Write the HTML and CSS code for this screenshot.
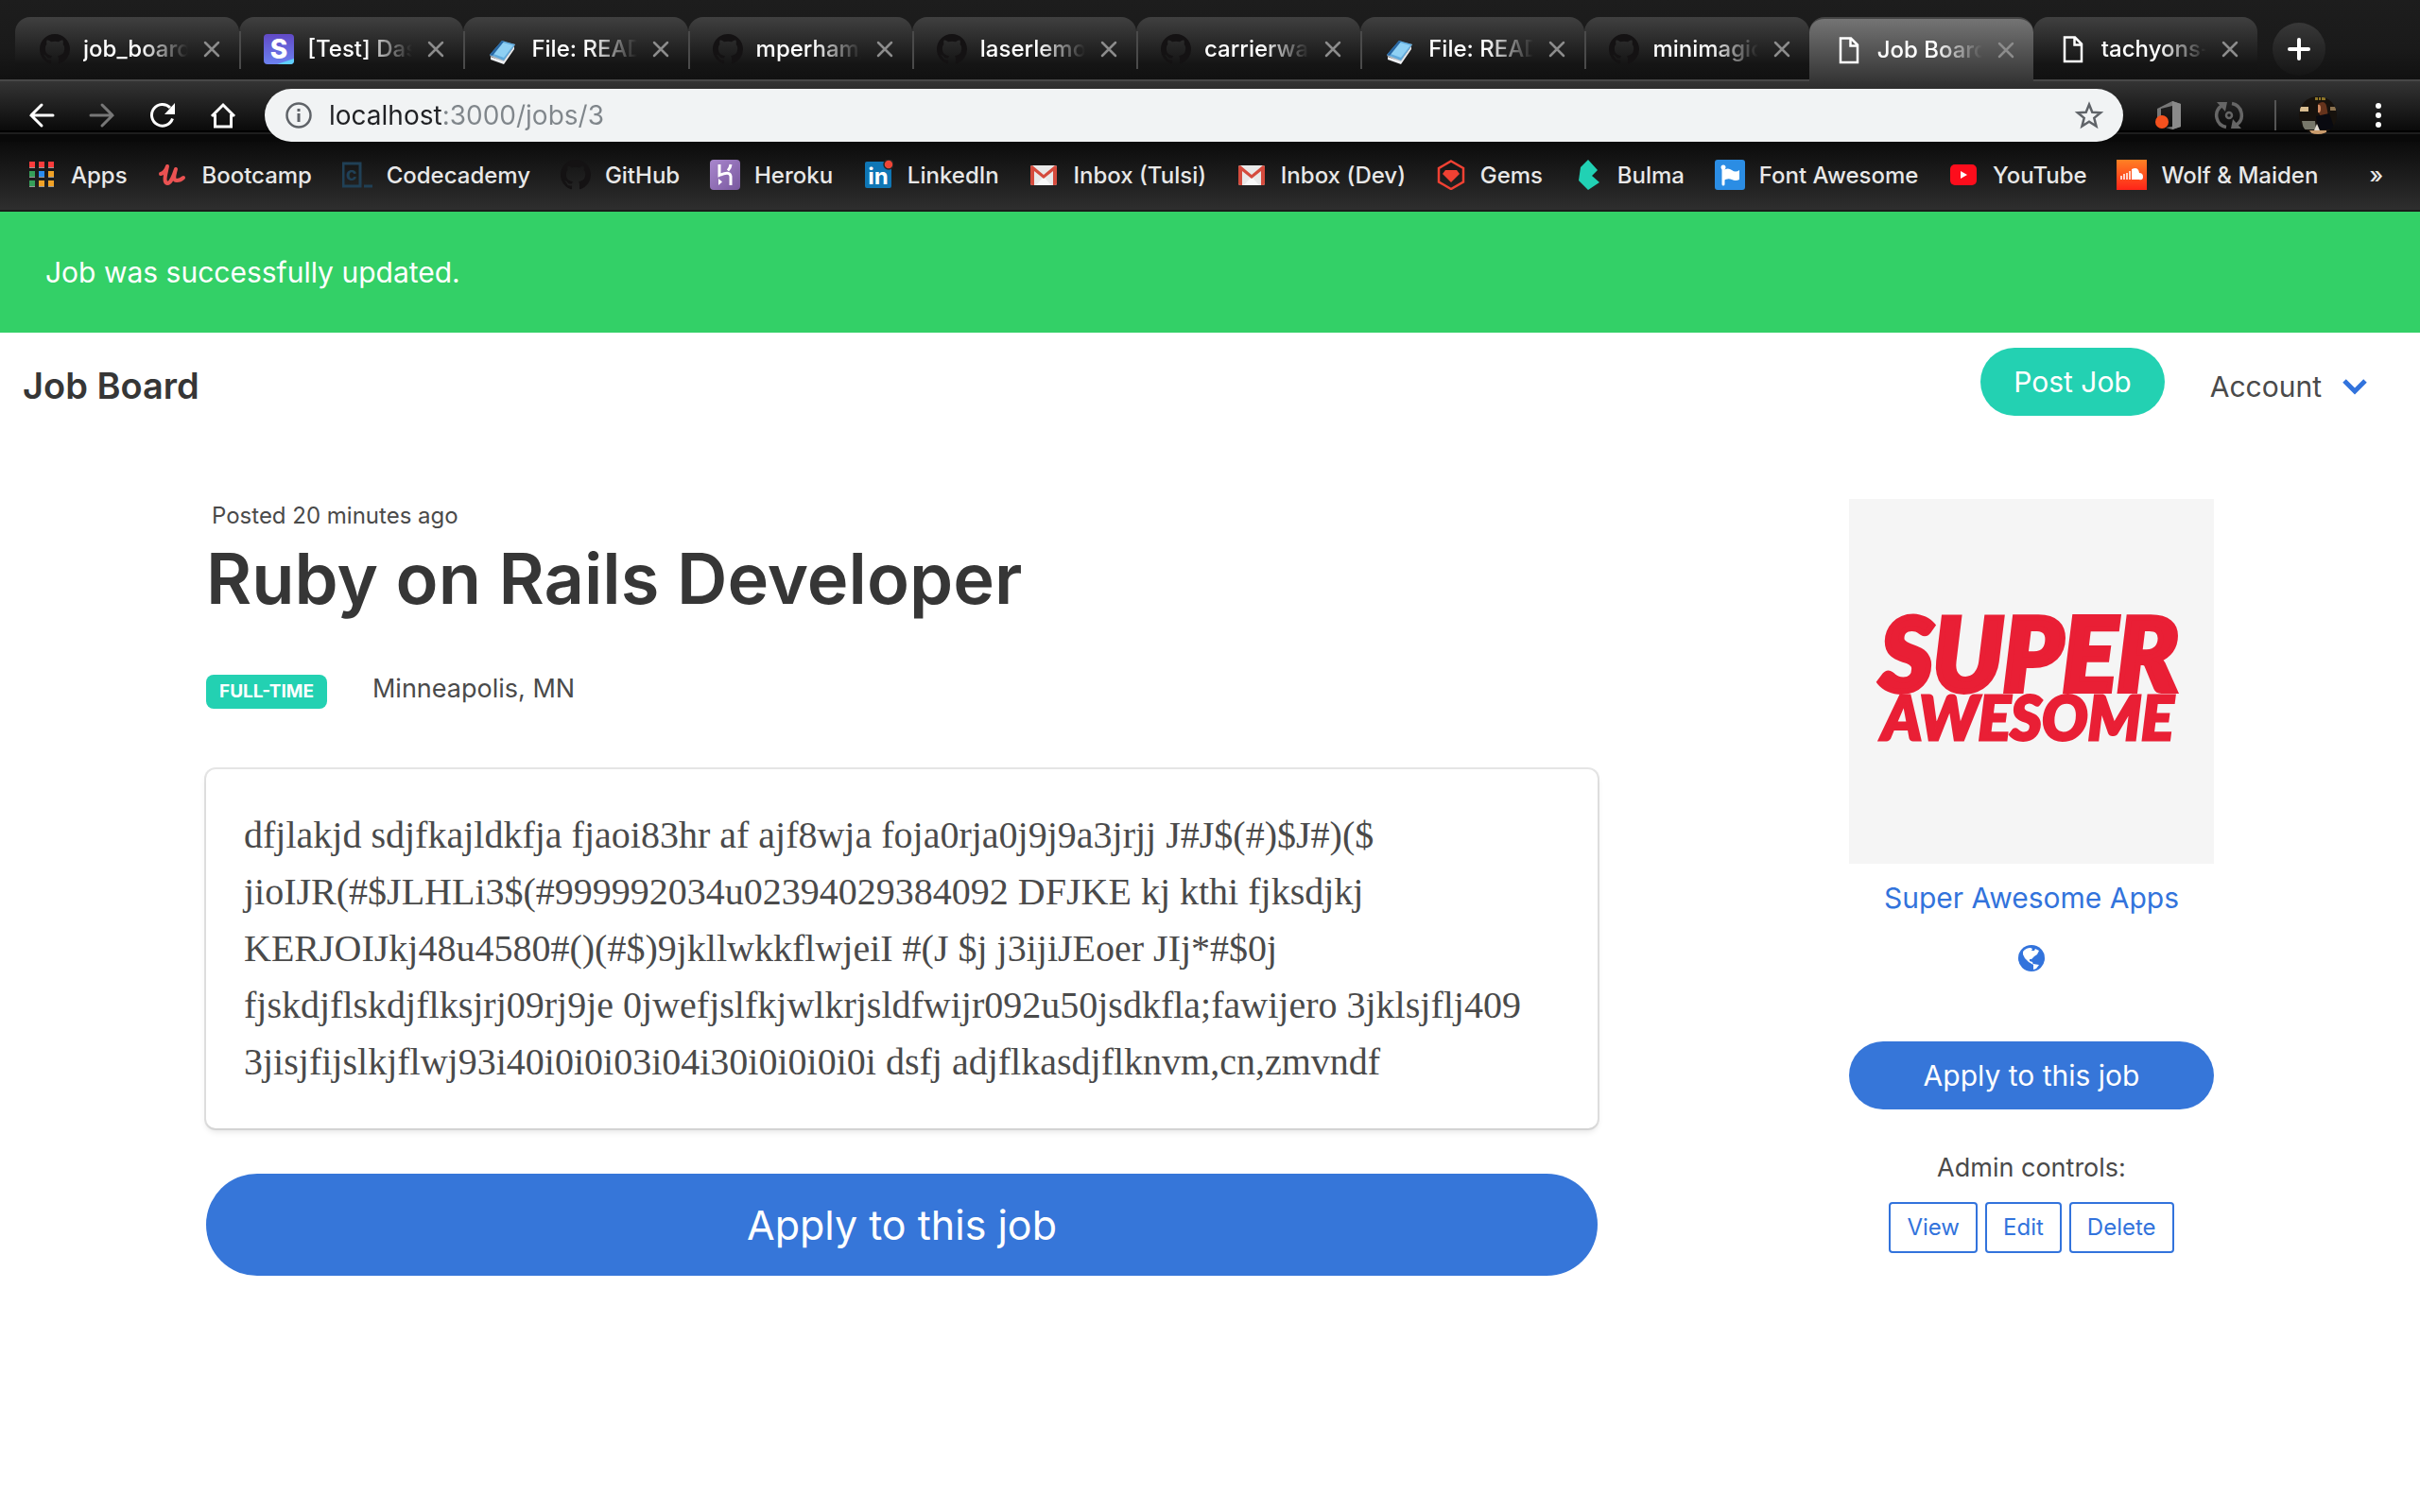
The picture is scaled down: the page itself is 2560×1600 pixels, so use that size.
FILE: index.html
```html
<!DOCTYPE html>
<html lang="en">
<head>
<meta charset="utf-8">
<title>Job Board</title>
<link rel="stylesheet" href="styles.css">
</head>
<body>
<svg class="sprite" aria-hidden="true">
  <defs>
    <symbol id="octocat" viewBox="0 0 16 16"><path d="M8 0C3.58 0 0 3.58 0 8c0 3.54 2.29 6.53 5.47 7.59.4.07.55-.17.55-.38 0-.19-.01-.82-.01-1.49-2.01.37-2.53-.49-2.69-.94-.09-.23-.48-.94-.82-1.13-.28-.15-.68-.52-.01-.53.63-.01 1.08.58 1.23.82.72 1.21 1.87.87 2.33.66.07-.52.28-.87.51-1.07-1.78-.2-3.64-.89-3.64-3.95 0-.87.31-1.59.82-2.15-.08-.2-.36-1.02.08-2.12 0 0 .67-.21 2.2.82.64-.18 1.32-.27 2-.27s1.36.09 2 .27c1.53-1.04 2.2-.82 2.2-.82.44 1.1.16 1.92.08 2.12.51.56.82 1.27.82 2.15 0 3.07-1.87 3.75-3.65 3.95.29.25.54.73.54 1.48 0 1.07-.01 1.93-.01 2.2 0 .21.15.46.55.38A8.01 8.01 0 0 0 16 8c0-4.42-3.58-8-8-8z" fill="#141213"/></symbol>
    <symbol id="book" viewBox="0 0 32 32"><path d="M2 23 16 8l13 3-12 19z" fill="#b9bdc4"/><path d="M3 24l14 5 11-16v3L17 32 3 27z" fill="#eef0f3"/><path d="M2 22 15 7l14 4-12 17z" fill="#5fa9dc"/><path d="M6 21 16 9l11 3-10 13z" fill="#8fd0f4"/><path d="M2 22 15 7l2 1L5 23z" fill="#2867a3"/></symbol>
    <symbol id="page" viewBox="0 0 32 32"><path d="M7 3.500h11l7 7V29H7zM17.500 4v7.500H25" fill="none" stroke="#fff" stroke-width="2.500"/></symbol>
    <symbol id="cross" viewBox="0 0 18 18"><path d="M2 2l14 14M16 2 2 16" fill="none" stroke="#8c8c8c" stroke-width="2.500" stroke-linecap="round"/></symbol>
    <symbol id="gmail" viewBox="0 0 32 32"><rect x="2" y="6" width="28" height="21" rx="2" fill="#e9e9e9"/><path d="M8 27l8-9 8 9z" fill="#f8f8f8"/><path d="M2 8a2 2 0 0 1 2-2l12 10L28 6a2 2 0 0 1 2 2v17a2 2 0 0 1-2 2h-2V12L16 20 6 12v15H4a2 2 0 0 1-2-2z" fill="#d54b3d"/></symbol>
    <linearGradient id="stripeFill" x1="0" y1="0" x2="0" y2="1"><stop offset="0" stop-color="#6149c6"/><stop offset="1" stop-color="#6c82f0"/></linearGradient>
    <linearGradient id="herokuFill" x1="0" y1="0" x2="1" y2="1"><stop offset="0" stop-color="#a987cd"/><stop offset="1" stop-color="#79589f"/></linearGradient>
    <linearGradient id="cloudFill" x1="0" y1="0" x2="0" y2="1"><stop offset="0" stop-color="#ff8124"/><stop offset="1" stop-color="#ff2419"/></linearGradient>
  </defs>
</svg>

<header class="browser">
  <nav class="tabs" aria-label="Tabs">
    <div class="tab"><a href="#"><svg class="ico"><use href="#octocat"/></svg><span>job_board</span></a><button aria-label="Close"><svg><use href="#cross"/></svg></button></div>
    <div class="tab"><a href="#"><svg class="ico" viewBox="0 0 32 32"><rect width="32" height="32" rx="4" fill="url(#stripeFill)"/><path d="M14 32 32 26v2a4 4 0 0 1-4 4z" fill="#5fd0fb"/><text x="16" y="26" text-anchor="middle" class="mark-s">S</text></svg><span>[Test] Dashboard</span></a><button aria-label="Close"><svg><use href="#cross"/></svg></button></div>
    <div class="tab"><a href="#"><svg class="ico"><use href="#book"/></svg><span>File: README</span></a><button aria-label="Close"><svg><use href="#cross"/></svg></button></div>
    <div class="tab"><a href="#"><svg class="ico"><use href="#octocat"/></svg><span>mperham/</span></a><button aria-label="Close"><svg><use href="#cross"/></svg></button></div>
    <div class="tab"><a href="#"><svg class="ico"><use href="#octocat"/></svg><span>laserlemon</span></a><button aria-label="Close"><svg><use href="#cross"/></svg></button></div>
    <div class="tab"><a href="#"><svg class="ico"><use href="#octocat"/></svg><span>carrierwave</span></a><button aria-label="Close"><svg><use href="#cross"/></svg></button></div>
    <div class="tab"><a href="#"><svg class="ico"><use href="#book"/></svg><span>File: README</span></a><button aria-label="Close"><svg><use href="#cross"/></svg></button></div>
    <div class="tab plain"><a href="#"><svg class="ico"><use href="#octocat"/></svg><span>minimagick</span></a><button aria-label="Close"><svg><use href="#cross"/></svg></button></div>
    <div class="tab active plain"><a href="#"><svg class="ico"><use href="#page"/></svg><span>Job Board</span></a><button aria-label="Close"><svg><use href="#cross"/></svg></button></div>
    <div class="tab plain"><a href="#"><svg class="ico"><use href="#page"/></svg><span>tachyons-</span></a><button aria-label="Close"><svg><use href="#cross"/></svg></button></div>
    <button class="new-tab" aria-label="New tab"><svg viewBox="0 0 24 24"><path d="M12 2v20M2 12h20" stroke="#fff" stroke-width="4" stroke-linecap="round"/></svg></button>
  </nav>

  <div class="toolbar">
    <button class="tool" aria-label="Back"><svg viewBox="0 0 32 32"><path d="M28 16H5M16 5 5 16l11 11" fill="none" stroke="#fff" stroke-width="3" stroke-linecap="round"/></svg></button>
    <button class="tool" aria-label="Forward"><svg viewBox="0 0 32 32"><path d="M4 16h23M16 5l11 11-11 11" fill="none" stroke="#777" stroke-width="3" stroke-linecap="round"/></svg></button>
    <button class="tool" aria-label="Reload"><svg viewBox="0 0 32 32"><path d="M26.500 19.500A11.300 11.300 0 1 1 24 8" fill="none" stroke="#fff" stroke-width="3"/><path d="M29 3v12H18z" fill="#fff"/></svg></button>
    <button class="tool" aria-label="Home"><svg viewBox="0 0 32 32"><path d="M4 17 16 5l12 12M7.500 15v13h17V15" fill="none" stroke="#fff" stroke-width="3"/></svg></button>
    <div class="omnibox">
      <svg class="info" viewBox="0 0 28 28"><circle cx="14" cy="14" r="12.500" fill="none" stroke="#5f6368" stroke-width="2.500"/><path d="M14 12v9M14 7v3" stroke="#5f6368" stroke-width="3"/></svg>
      <input type="text" value="localhost:3000/jobs/3" aria-label="Address">
      <svg class="star" viewBox="0 0 32 32"><path d="M16 4.500l3.300 8.200 8.800.6-6.800 5.600 2.200 8.600L16 22.700l-7.500 4.800 2.200-8.600-6.800-5.600 8.800-.6z" fill="none" stroke="#5f6368" stroke-width="2.500"/></svg>
    </div>
    <button class="tool" aria-label="Office"><svg viewBox="0 0 32 32"><path d="M4 9 20 1l9 3v24l-9 3-7-2 7-1V6L8 9v10H4z" fill="#777"/><path d="M20 1l9 3v24l-9 3z" fill="#8a8a8a"/><circle cx="9" cy="23" r="7" fill="#f4511e"/></svg></button>
    <button class="tool" aria-label="Sync"><svg viewBox="0 0 32 32"><g fill="none" stroke="#666" stroke-width="3.500"><path d="M13 28.500A12.500 12.500 0 0 1 8 6M19 3.500A12.500 12.500 0 0 1 24 26"/><circle cx="16" cy="16" r="3" stroke-width="2.500"/></g><path d="M3 2h11l-2 10zM29 30H18l2-10z" fill="#666"/></svg></button>
    <span class="divider"></span>
    <button class="avatar" aria-label="Profile"><svg viewBox="0 0 40 40"><rect width="40" height="40" fill="#17120d"/><path d="M1 11h9v5H1z" fill="#d9bd90"/><path d="M33 11h6v4h-6z" fill="#8c7350"/><path d="M17 1h3v3h-3zM21 1h2v3h-2zM24 1h4v3h-4z" fill="#8d7528"/><path d="M20 8q7-5 9 2l2 11-6 3-4-6z" fill="#65331c"/><path d="M20 9q3-1 3 4t-3 4z" fill="#d08a62"/><path d="M18 21l14-3 6 17H20z" fill="#090a10"/><path d="M3 26h14l1 9H5z" fill="#77776a"/><path d="M11 36h18v4H14z" fill="#c99b6c"/><path d="M19 29l3 7h-6z" fill="#e2dcd2"/></svg></button>
    <button class="tool more" aria-label="Menu"><svg viewBox="0 0 32 32" fill="#fff"><circle cx="16" cy="6" r="3"/><circle cx="16" cy="16" r="3"/><circle cx="16" cy="26" r="3"/></svg></button>
  </div>

  <nav class="bookmarks" aria-label="Bookmarks">
    <div class="marks">
    <a href="#"><svg class="ico" viewBox="0 0 32 32"><path d="M3 2h6v6H3zM13 2h6v6h-6zM23 2h6v6h-6z" fill="#fa3c3c"/><path d="M3 12h6v6H3zM3 22h6v6H3z" fill="#36a05a"/><path d="M13 12h6v6h-6z" fill="#2a8cf0"/><path d="M23 12h6v6h-6zM13 22h6v6h-6zM23 22h6v6h-6z" fill="#f0a227"/><path d="M3 8h6v1H3zM13 8h6v1h-6zM23 8h6v1h-6zM3 18h6v1H3zM13 18h6v1h-6zM23 18h6v1h-6zM3 28h6v1H3zM13 28h6v1h-6zM23 28h6v1h-6z" fill="#999"/></svg>Apps</a>
    <a href="#"><svg class="ico" viewBox="0 0 32 32"><path d="M4 15c4-1 6-5 7-8-1 6-5 17 0 18 4 0 7-9 9-15-2 7-3 12 1 12 3 0 5-1 7-3" fill="none" stroke="#ea5252" stroke-width="4" stroke-linecap="round" stroke-linejoin="round"/></svg>Bootcamp</a>
    <a href="#"><svg class="ico" viewBox="0 0 32 32"><rect x="1" y="4" width="18" height="24" fill="none" stroke="#204056" stroke-width="3"/><text x="10" y="22" text-anchor="middle" class="mark-c">c</text><path d="M23 28h9" stroke="#204056" stroke-width="3"/></svg>Codecademy</a>
    <a href="#"><svg class="ico"><use href="#octocat"/></svg>GitHub</a>
    <a href="#"><svg class="ico" viewBox="0 0 32 32"><rect width="32" height="32" rx="4" fill="url(#herokuFill)"/><path d="M10 5v11.500q11-5 12 1V27M22 5q-.5 4-3 6.500" fill="none" stroke="#fff" stroke-width="3"/><path d="M9 20l4 3.500L9 27z" fill="#fff"/></svg>Heroku</a>
    <a href="#"><svg class="ico" viewBox="0 0 32 32"><rect x="2" y="2" width="28" height="28" rx="2" fill="#0f76b5"/><text x="16" y="26" text-anchor="middle" class="mark-in">in</text><circle cx="27" cy="5" r="5" fill="#ee4536" stroke="#262626" stroke-width="1.500"/></svg>LinkedIn</a>
    <a href="#"><svg class="ico"><use href="#gmail"/></svg>Inbox (Tulsi)</a>
    <a href="#"><svg class="ico"><use href="#gmail"/></svg>Inbox (Dev)</a>
    <a href="#"><svg class="ico" viewBox="0 0 32 32"><path d="M16 1.500 29 9v14.500L16 31 3 23.500V9z" fill="none" stroke="#f04133" stroke-width="2.500"/><path d="M10 11h12l3 4-9 9-9-9z" fill="#f04133"/></svg>Gems</a>
    <a href="#"><svg class="ico" viewBox="-5 0 32 32"><path d="M11 0 21 11l-6 6 8 7L11 32 1 22 3 8z" fill="#21d1b4"/></svg>Bulma</a>
    <a href="#"><svg class="ico" viewBox="0 0 32 32"><rect width="32" height="32" rx="3" fill="#2b8de4"/><path d="M9 8v18" stroke="#fff" stroke-width="3" stroke-linecap="round"/><circle cx="9" cy="8" r="2.500" fill="#fff"/><path d="M9 11q5-3 9 0t8 0v10q-4 2-8 0t-9 1z" fill="#fff"/></svg>Font Awesome</a>
    <a href="#"><svg class="ico" viewBox="0 0 32 32"><rect x="2" y="5" width="28" height="22" rx="5" fill="#fd0d1c"/><path d="M13 12l7 4-7 4z" fill="#fff"/></svg>YouTube</a>
    <a href="#"><svg class="ico" viewBox="0 0 32 32"><rect width="32" height="32" fill="url(#cloudFill)"/><path d="M5 17v4M8 15v6M11 14v7M14 12v9" stroke="#fff" stroke-width="1.500"/><path d="M16 10q7-3 8 4 4 0 4 4t-4 3h-8z" fill="#fff"/></svg>Wolf &amp; Maiden</a>
    </div>
    <button class="overflow" aria-label="More bookmarks">»</button>
  </nav>
</header>

<div class="notice" role="status">Job was successfully updated.</div>

<nav class="site-nav">
  <a class="brand" href="#">Job Board</a>
  <a class="pill post" href="#">Post Job</a>
  <button class="account">Account<svg viewBox="0 0 26 18"><path d="M2 3l11 11L24 3" fill="none" stroke="#3273dc" stroke-width="5"/></svg></button>
</nav>

<main class="job">
  <article>
    <p class="posted">Posted 20 minutes ago</p>
    <h1>Ruby on Rails Developer</h1>
    <div class="meta"><span class="tag">FULL-TIME</span><span class="place">Minneapolis, MN</span></div>
    <div class="box">dfjlakjd sdjfkajldkfja fjaoi83hr af ajf8wja foja0rja0j9j9a3jrjj J#J$(#)$J#)($ jioIJR(#$JLHLi3$(#999992034u02394029384092 DFJKE kj kthi fjksdjkj KERJOIJkj48u4580#()(#$)9jkllwkkflwjeiI #(J $j j3ijiJEoer JIj*#$0j fjskdjflskdjflksjrj09rj9je 0jwefjslfkjwlkrjsldfwijr092u50jsdkfla;fawijero 3jklsjflj409 3jisjfijslkjflwj93i40i0i0i03i04i30i0i0i0i0i dsfj adjflkasdjflknvm,cn,zmvndf</div>
    <a class="pill apply large" href="#">Apply to this job</a>
  </article>
  <aside>
    <svg class="company-logo" viewBox="0 0 386 386" role="img" aria-label="Super Awesome">
      <rect width="386" height="386" fill="#f5f5f5"/>
      <text x="33" y="203" class="logo-top">SUPER</text>
      <text x="35" y="255" class="logo-bottom">AWESOME</text>
    </svg>
    <a class="company" href="#">Super Awesome Apps</a>
    <a class="site" href="#" aria-label="Website"><svg viewBox="0 0 28 28"><circle cx="14" cy="14" r="14" fill="#3273dc"/><path d="M5 7q3-4 8-4l2 1-1 2 3 0 1-2 4 2-2 4-3 2-3 3-2 0 0 2 3 1 1 3-5-3-4-4-2-4z" fill="#fff"/><path d="M16 20l6 1-3 4-3 1z" fill="#fff"/></svg></a>
    <a class="pill apply" href="#">Apply to this job</a>
    <p class="admin">Admin controls:</p>
    <div class="controls"><a href="#">View</a><a href="#">Edit</a><a href="#">Delete</a></div>
  </aside>
</main>
</body>
</html>
```
FILE: styles.css
```css
* { box-sizing: border-box; }
body { margin: 0; background: #fff; color: #4a4a4a; font-family: Inter, "Liberation Sans", sans-serif; }
a { color: inherit; text-decoration: none; }
button { border: 0; padding: 0; background: none; color: inherit; font: inherit; }
svg { display: block; flex: none; }
p, h1 { margin: 0; }
.sprite { position: absolute; width: 0; height: 0; }
.ico { width: 32px; height: 32px; }

/* Browser frame */
.browser { color: #fff; font-size: 24px; font-weight: 500; background: #0a0a0a; }
.tabs { display: flex; padding: 18px 100px 0 16px; height: 84px; background: linear-gradient(#1d1d1d, #1a1a1a 60%, #111); }
.tab { position: relative; display: flex; align-items: center; flex: 1; min-width: 0; gap: 16px; padding: 2px 20px 0 26px; border-radius: 16px 16px 0 0; background: linear-gradient(#404040, #151515 75%, #111); }
.tab a { display: flex; align-items: center; gap: 14px; flex: 1; min-width: 0; }
.tab span { flex: 1; min-width: 0; overflow: hidden; white-space: nowrap; line-height: 32px; mask-image: linear-gradient(90deg, #000 55%, transparent); }
.tab button svg { width: 18px; height: 18px; }
.tab::after { content: ""; position: absolute; right: -2px; top: 15px; width: 2px; height: 40px; background: #4a4a4a; z-index: 1; }
.tab.plain::after { display: none; }
.tab.active { z-index: 1; height: 68px; margin-bottom: -2px; padding-top: 0; border-top: 2px solid #444; background: linear-gradient(#747474, #353535); }
.tab.active + .tab { border-bottom-left-radius: 16px; }
.tab:has(+ .active) { border-bottom-right-radius: 16px; }
.new-tab { display: flex; align-items: center; justify-content: center; width: 56px; height: 56px; margin: 6px 0 0 16px; border-radius: 50%; background: linear-gradient(#383838, #151515); }
.new-tab svg { width: 24px; height: 24px; }

.toolbar { display: flex; align-items: flex-start; height: 66px; padding: 10px 12px 0; background: linear-gradient(#474747 2px, #343434 2px, #0a0a0a 54px, #000 54px, #000 56px, #1e1e1e 56px, #1e1e1e 58px, #090909 58px); }
.tool { display: flex; align-items: center; justify-content: center; width: 64px; height: 56px; }
.tool svg { width: 32px; height: 32px; }
.omnibox { display: flex; align-items: center; flex: 1; gap: 18px; height: 56px; margin: 0 16px 0 12px; padding: 0 20px 0 22px; border-radius: 28px; background: #f1f3f4; }
.info { width: 28px; height: 28px; }
.star { width: 32px; height: 32px; }
.omnibox input { flex: 1; min-width: 0; border: 0; padding: 0; font: 400 28px Inter, sans-serif; color: transparent; background: linear-gradient(90deg, #202124 122px, #80868b 122px); background-clip: text; -webkit-background-clip: text; }
.divider { width: 2px; height: 32px; margin: 12px 24px 0 16px; background: #555; }
.avatar { width: 40px; height: 40px; margin: 8px 12px 0 0; border-radius: 50%; overflow: hidden; }

.bookmarks { display: flex; align-items: center; height: 74px; padding: 0 39px 2px 28px; gap: 54px; border-bottom: 2px solid #1a1a1a; background: linear-gradient(#0b0b0b, #2e2e2e); color: #e8e8e8; }
.marks { display: flex; flex: 1; justify-content: space-between; }
.marks a { display: flex; align-items: center; gap: 15px; white-space: nowrap; }
.mark-s { font: 800 28px Inter, sans-serif; fill: #fff; }
.mark-c { font: 700 20px Inter, sans-serif; fill: #204056; }
.mark-in { font: 700 24px Inter, sans-serif; fill: #fff; }

/* Job board */
.notice { padding: 40px 48px; background: #33d067; color: #fff; font-size: 30px; line-height: 48px; }
.site-nav { display: flex; align-items: center; padding: 16px 56px 16px 24px; font-size: 30px; }
.brand { margin-right: auto; padding-top: 8px; color: #363636; font-size: 38px; font-weight: 600; line-height: 48px; }
.pill { display: block; border-radius: 999px; color: #fff; font-size: 30px; line-height: 72px; text-align: center; }
.post { padding: 0 35px; background: #23d1b2; }
.account { display: flex; align-items: center; gap: 22px; margin-left: 48px; padding-top: 10px; line-height: 48px; }
.account svg { width: 26px; height: 18px; }

.job { display: grid; grid-template-columns: 1472fr 386fr; column-gap: 266px; padding: 72px 218px; align-items: start; }
.posted { padding-left: 6px; font-size: 24px; line-height: 36px; }
h1 { margin-top: 8px; color: #363636; font-size: 74px; font-weight: 600; line-height: 80px; }
.meta { display: flex; align-items: baseline; gap: 48px; margin-top: 59px; }
.tag { padding: 0 14px; border-radius: 8px; background: #23d1b2; color: #fff; font-size: 19px; font-weight: 700; line-height: 36px; }
.place { font-size: 27px; line-height: 36px; }
.box { margin-top: 64px; padding: 40px; border-radius: 10px; box-shadow: 0 4px 6px rgba(10, 10, 10, .1), 0 0 0 2px rgba(10, 10, 10, .1); font: 40px/60px "Liberation Serif", serif; text-rendering: optimizeLegibility; font-variant-ligatures: common-ligatures discretionary-ligatures; }
.apply { background: #3676d9; }
.large { margin-top: 48px; font-size: 43px; line-height: 108px; }

aside { display: flex; flex-direction: column; align-items: stretch; text-align: center; }
.company-logo { width: 100%; height: auto; }
.logo-top { font: italic 900 107px Lato, sans-serif; fill: #e91f35; stroke: #e91f35; stroke-width: 6px; }
.logo-bottom { font: italic 900 64px Lato, sans-serif; fill: #e91f35; stroke: #e91f35; stroke-width: 3px; }
.company { margin-top: 12px; color: #3273dc; font-size: 30px; line-height: 48px; }
.site { align-self: center; margin: 26px 0 74px; }
.site svg { width: 28px; height: 28px; }
.admin { margin-top: 42px; font-size: 27px; line-height: 40px; }
.controls { display: flex; justify-content: center; gap: 8px; margin-top: 16px; }
.controls a { padding: 0 17px; border: 2px solid #3273dc; border-radius: 4px; color: #3273dc; font-size: 24px; line-height: 50px; }
```
